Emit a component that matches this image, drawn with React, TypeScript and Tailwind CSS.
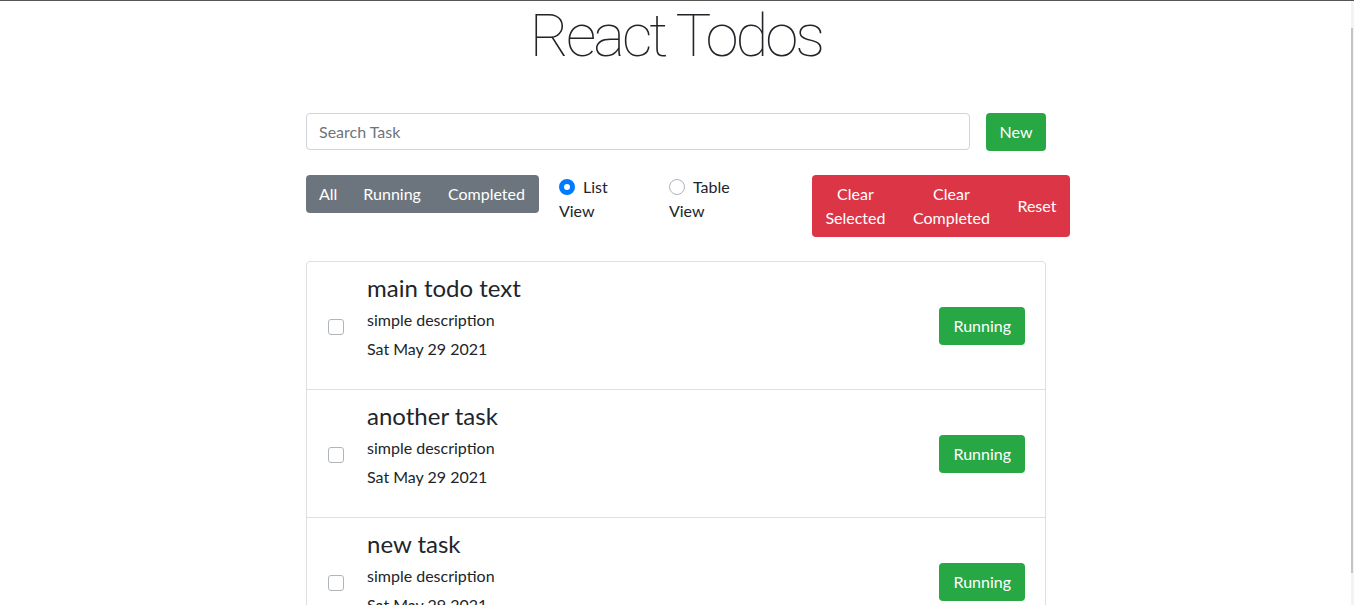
import { FunctionComponent, ReactElement, useState } from "react";

interface Todo {
    id: number;
    title: string;
    description: string;
    date: string;
}

const todos: Todo[] = [
    { id: 1, title: "main todo text", description: "simple description", date: "Sat May 29 2021" },
    { id: 2, title: "another task", description: "simple description", date: "Sat May 29 2021" },
    { id: 3, title: "new task", description: "simple description", date: "Sat May 29 2021" },
];

const TodoItem: FunctionComponent<{ todo: Todo; last: boolean }> = ({ todo, last }): ReactElement => {
    return (
        <div className={`flex items-center h-[128px] pl-[21px] pr-[20px] ${last ? "" : "border-b border-[#dfdfdf]"}`}>
            {/* checkbox */}
            <div className="w-4 h-4 mt-[2px] rounded-[3px] border border-[#adb5bd] bg-white shrink-0" />
            <div className="self-start pt-[12px] ml-[23px] flex-1">
                <h4 className="text-[24px] leading-[27px] mb-[7px]">{todo.title}</h4>
                <p className="text-[16px] leading-6 mb-[5px]">{todo.description}</p>
                <p className="text-[16px] leading-6">{todo.date}</p>
            </div>
            <button className="h-[38px] px-[14px] rounded-[4px] bg-[#28a745] text-white text-[16px] leading-6">
                Running
            </button>
        </div>
    );
};

const RadioOption: FunctionComponent<{ label: string; checked: boolean; onPick: () => void; width: string }> = ({
    label,
    checked,
    onPick,
    width,
}): ReactElement => {
    return (
        <label className={`block ${width} cursor-pointer`} onClick={onPick}>
            <span
                className={`inline-block align-[-2px] w-4 h-4 rounded-full mr-2 ${
                    checked ? "bg-[#007bff] border-[5px] border-[#007bff]" : "border border-[#adb5bd]"
                }`}
            >
                {checked && <span className="block w-full h-full rounded-full bg-white" />}
            </span>
            {label}
        </label>
    );
};

const App: FunctionComponent = (): ReactElement => {
    const [view, setView] = useState<string>("list");

    return (
        <div className="relative h-[605px] pr-[2px] overflow-hidden bg-white border-t border-[#555] text-[#212529] font-['Lato',sans-serif]">
            <h1 className="mt-[5px] h-[61px] text-center text-[60px] leading-[60px] font-thin tracking-[-3px] font-['Roboto',sans-serif]">
                React Todos
            </h1>

            <div className="w-[740px] mx-auto mt-[46px]">
                {/* search row */}
                <div className="flex gap-4">
                    <input
                        type="text"
                        placeholder="Search Task"
                        className="flex-1 h-[37px] px-3 rounded-[4px] border border-[#ced4da] text-[16px] placeholder-[#6c757d] outline-none"
                    />
                    <button className="h-[38px] w-[60px] rounded-[4px] bg-[#28a745] text-white text-[16px]">New</button>
                </div>

                {/* filter row */}
                <div className="flex items-start mt-[24px]">
                    <div className="flex shrink-0 h-[38px] rounded-[4px] bg-[#6c757d] text-white text-[16px] leading-6">
                        <button className="px-[13px]">All</button>
                        <button className="px-[13px]">Running</button>
                        <button className="px-[14px]">Completed</button>
                    </div>

                    <div className="shrink-0 ml-[20px] w-[110px] text-[16px] leading-6">
                        <RadioOption label="List View" checked={view === "list"} onPick={() => setView("list")} width="w-[72px]" />
                    </div>
                    <div className="shrink-0 w-[143px] text-[16px] leading-6">
                        <RadioOption label="Table View" checked={view === "table"} onPick={() => setView("table")} width="w-[75px]" />
                    </div>

                    <div className="flex shrink-0 h-[62px] rounded-[4px] bg-[#dc3545] text-white text-[16px] leading-6">
                        <button className="w-[87px] px-3 text-center">Clear Selected</button>
                        <button className="w-[105px] px-3 text-center">Clear Completed</button>
                        <button className="w-[66px] px-3 text-center">Reset</button>
                    </div>
                </div>

                {/* todo list */}
                <div className="mt-[24px] rounded-[4px] border border-[#dfdfdf]">
                    {todos.map((todo, i) => (
                        <TodoItem key={todo.id} todo={todo} last={i === todos.length - 1} />
                    ))}
                </div>
            </div>

            {/* thin scrollbar */}
            <div className="absolute right-0 top-0 w-[3px] h-full bg-[#f3f3f3]">
                <div className="absolute left-0 top-[27px] w-[2px] h-[545px] bg-[#c4c4c4]" />
            </div>
        </div>
    );
};

export default App;
